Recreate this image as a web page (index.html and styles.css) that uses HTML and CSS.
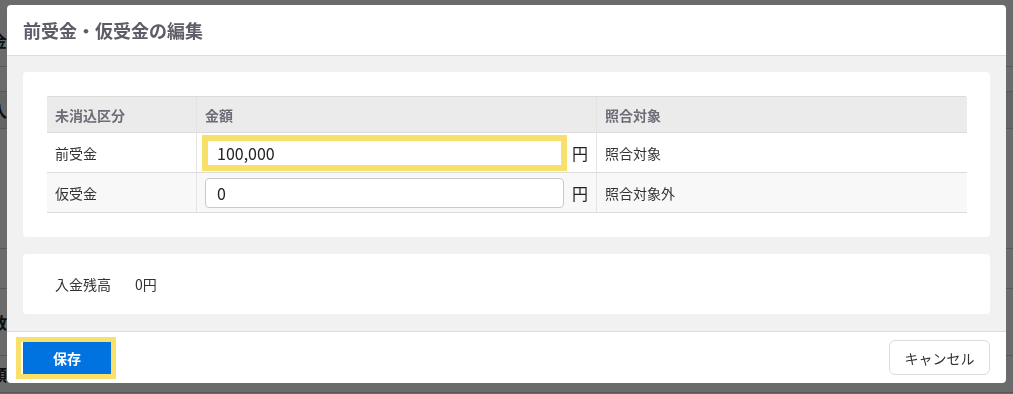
FILE: index.html
```html
<!DOCTYPE html>
<html lang="ja">

<head>
    <meta charset="UTF-8">
    <meta name="viewport" content="width=device-width, initial-scale=1.0">
    <title>前受金・仮受金の編集</title>
    <link rel="stylesheet" href="styles.css">
</head>

<body>
    <!-- page behind the dialog -->
    <div class="page">
        <div class="page-row row-top"><span class="page-label">金</span></div>
        <div class="page-row row-a"></div>
        <div class="page-row row-b dark"><span class="page-label">入</span></div>
        <div class="page-row row-c"></div>
        <div class="page-row row-d"></div>
        <div class="page-row row-e"><span class="page-label">数</span></div>
        <div class="page-row row-f"><span class="page-label">額</span></div>
    </div>

    <div class="overlay">
        <div class="modal">
            <div class="modal-header">
                <h1 class="modal-title">前受金・仮受金の編集</h1>
            </div>

            <div class="modal-body">
                <div class="card card-table">
                    <div class="grid">
                        <div class="cell head">未消込区分</div>
                        <div class="cell head sep">金額</div>
                        <div class="cell head sep">照合対象</div>

                        <div class="cell">前受金</div>
                        <div class="cell sep amount">
                            <input class="amount-input focused" type="text" value="100,000">
                            <span class="yen">円</span>
                        </div>
                        <div class="cell sep">照合対象</div>

                        <div class="cell alt">仮受金</div>
                        <div class="cell sep amount alt">
                            <input class="amount-input" type="text" value="0">
                            <span class="yen">円</span>
                        </div>
                        <div class="cell sep alt">照合対象外</div>
                    </div>
                </div>

                <div class="card card-balance">
                    <span class="balance-label">入金残高</span>
                    <span class="balance-value">0円</span>
                </div>
            </div>

            <div class="modal-footer">
                <button class="btn btn-save">保存</button>
                <button class="btn btn-cancel">キャンセル</button>
            </div>
        </div>
    </div>
</body>

</html>
```

FILE: styles.css
```css
body {
    font-family: "Noto Sans CJK JP", "Noto Sans", sans-serif;
    margin: 0;
    width: 1013px;
    height: 394px;
    overflow: hidden;
    background-color: #ffffff;
    color: #333333;
}

/* Background page */
.page {
    width: 100%;
}

.page-row {
    border-bottom: 1px solid #cfcfcf;
    display: flex;
    align-items: center;
}

.page-row.dark {
    background-color: #f0f0f0;
}

.page-label {
    margin-left: -9px;
    font-size: 16px;
    font-weight: bold;
    color: #222;
}

.row-top {
    height: 67px;
    padding-top: 14px;
    box-sizing: border-box;
}

.row-a { height: 24px; }
.row-b { height: 36px; }
.row-c { height: 119px; }
.row-d { height: 39px; }
.row-e { height: 66px; }
.row-f { height: 36px; }

/* Dialog */
.overlay {
    position: fixed;
    top: 0;
    left: 0;
    width: 100%;
    height: 100%;
    background: rgba(0, 0, 0, 0.58);
    padding: 5px 7px;
    box-sizing: border-box;
}

.modal {
    width: 999px;
    height: 378px;
    background: #ffffff;
    border-radius: 4px;
    overflow: hidden;
    display: flex;
    flex-direction: column;
}

.modal-header {
    height: 50px;
    padding: 0 16px;
    display: flex;
    align-items: center;
    border-bottom: 1px solid #dddddd;
}

.modal-title {
    margin: 0;
    font-size: 18px;
    font-weight: bold;
    color: #5d5d68;
}

.modal-body {
    background-color: #f1f1f1;
    padding: 16px 16px 17px;
    display: flex;
    flex-direction: column;
    gap: 17px;
    border-bottom: 1px solid #dddddd;
}

.card {
    background: #ffffff;
    border-radius: 4px;
}

.card-table {
    padding: 24px;
}

.grid {
    display: grid;
    grid-template-columns: 149px 400px 371px;
    grid-template-rows: 36px 40px 40px;
    border-top: 1px solid #dcdcdc;
}

.cell {
    display: flex;
    align-items: center;
    padding: 0 8px;
    font-size: 14px;
    color: #333333;
    border-bottom: 1px solid #dcdcdc;
}

.cell.sep {
    border-left: 1px solid #e4e4e4;
}

.cell.head {
    background-color: #ebebeb;
    color: #6d6d78;
    font-weight: bold;
}

.cell.alt {
    background-color: #f8f8f8;
}

.amount {
    gap: 8px;
}

.amount-input {
    width: 359px;
    height: 30px;
    box-sizing: border-box;
    border: 1px solid #c9c9c9;
    border-radius: 4px;
    padding: 0 11px;
    font-family: inherit;
    font-size: 16px;
    color: #222222;
    background: #ffffff;
}

.amount-input.focused {
    border-color: #f8e06a;
    border-radius: 0;
    box-shadow: 0 0 0 3px #f8e06a, inset 0 0 0 2px #f8e06a;
    outline: none;
}

.yen {
    font-size: 16px;
    color: #222222;
}

.card-balance {
    height: 60px;
    padding: 0 32px;
    display: flex;
    align-items: center;
    font-size: 14px;
    color: #333333;
}

.balance-value {
    margin-left: 24px;
}

.modal-footer {
    flex: 1;
    display: flex;
    align-items: center;
    justify-content: space-between;
    padding: 0 16px 0 14px;
}

.btn {
    font-family: inherit;
    font-size: 14px;
    cursor: pointer;
}

.btn-save {
    width: 90px;
    height: 32px;
    background-color: #0073e0;
    color: #ffffff;
    font-weight: bold;
    border: none;
    border-left: 2px solid #ffffff;
    border-radius: 0;
    outline: 5px solid #f8e06a;
}

.btn-cancel {
    width: 101px;
    height: 35px;
    background: #ffffff;
    color: #333333;
    border: 1px solid #dcdcdc;
    border-radius: 6px;
}
```
